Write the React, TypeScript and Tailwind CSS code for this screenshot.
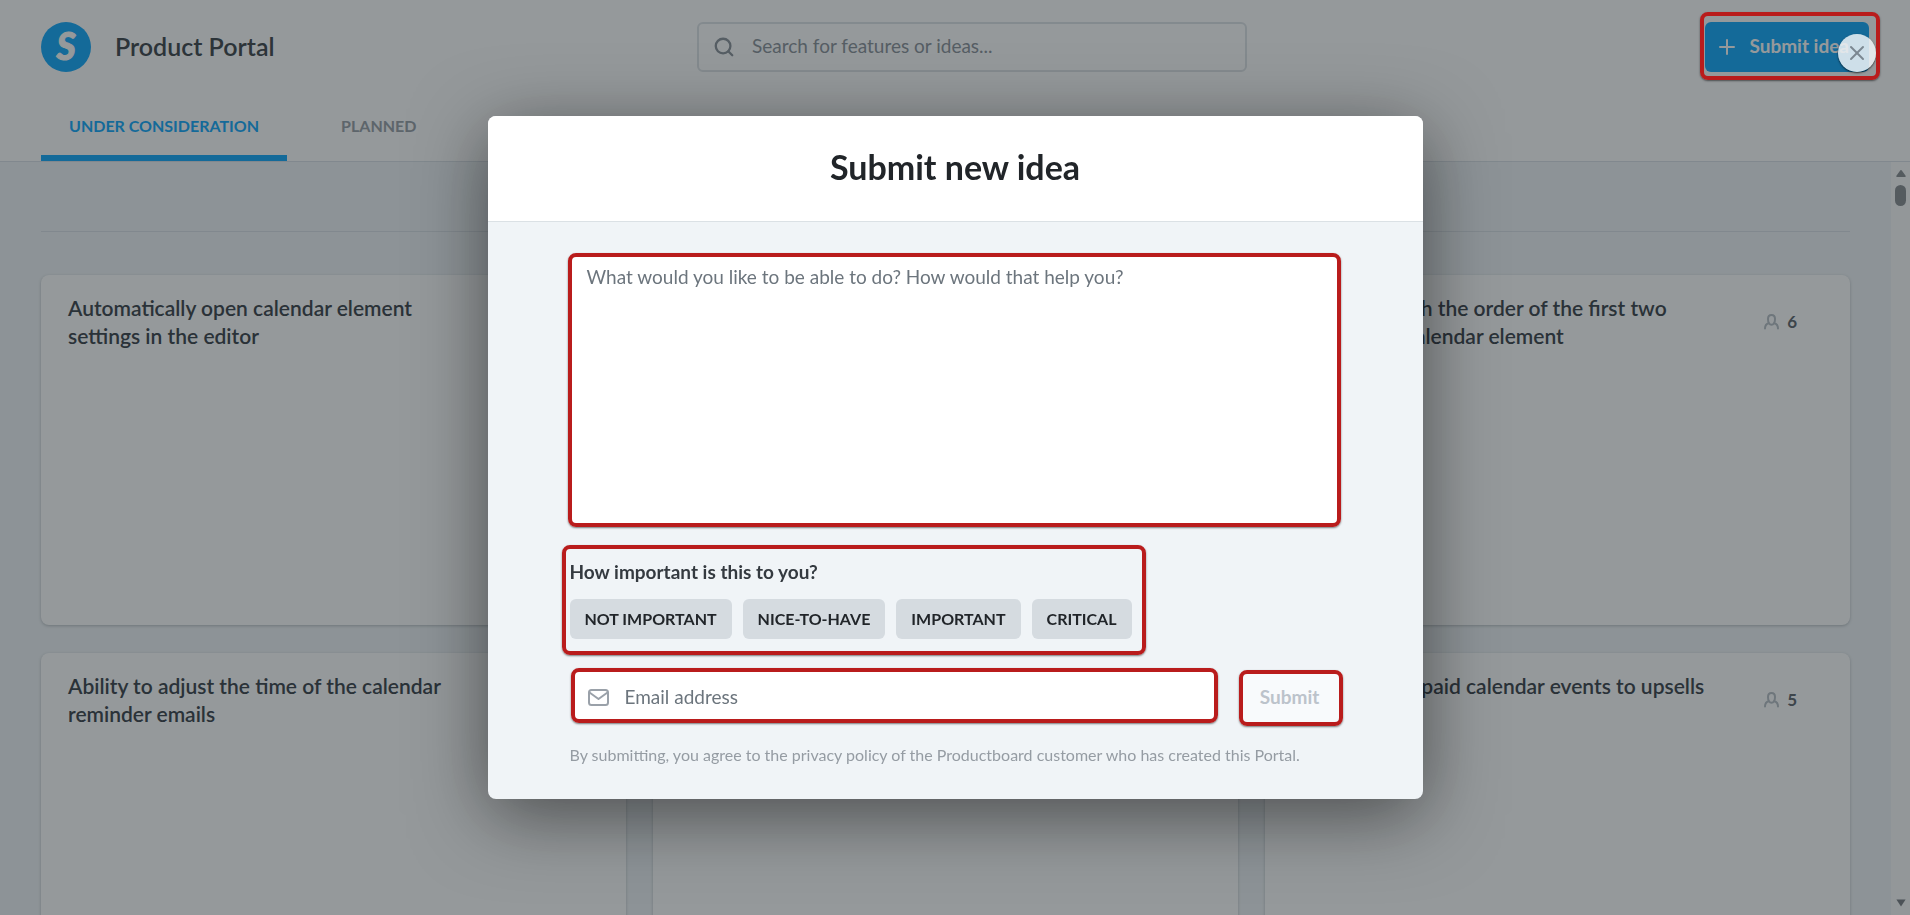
import { useState } from 'react';
import { Plus, Search, X } from 'lucide-react';
import { clsx } from 'clsx';

type Idea = {
  id: number;
  title?: string;
  votes?: number;
};

const IDEAS: Idea[] = [
  { id: 1, title: 'Automatically open calendar element settings in the editor' },
  { id: 2 },
  {
    id: 3,
    title: 'Need to switch the order of the first two fields in the calendar element',
    votes: 6,
  },
  { id: 4, title: 'Ability to adjust the time of the calendar reminder emails' },
  { id: 5 },
  { id: 6, title: 'Ability to add paid calendar events to upsells', votes: 5 },
];

const TABS = ['Under consideration', 'Planned'];
const IMPORTANCE = ['Not important', 'Nice-to-have', 'Important', 'Critical'];

function Highlight({ className }: { className: string }) {
  return (
    <span
      aria-hidden="true"
      className={clsx(
        'pointer-events-none absolute rounded-lg border-4 border-[#b91c1c] shadow-[0_1px_2px_rgba(0,0,0,0.5)]',
        className
      )}
    />
  );
}

function Logo() {
  return (
    <svg width="50" height="50" viewBox="0 0 50 50" role="img" aria-label="Logo">
      <circle cx="25" cy="25" r="25" fill="#15a9fb" />
      <text
        x="25"
        y="38"
        textAnchor="middle"
        fill="#fff"
        stroke="#fff"
        strokeWidth="1"
        fontFamily="Lato, sans-serif"
        fontWeight="900"
        fontStyle="italic"
        fontSize="37"
      >
        S
      </text>
    </svg>
  );
}

function VoterIcon() {
  return (
    <svg
      width="15"
      height="16"
      viewBox="0 0 15 16"
      fill="none"
      stroke="#b9c0c6"
      strokeWidth="2"
      strokeLinecap="round"
    >
      <path d="M7.500 1C5.300 1 4 2.500 4 5c0 3.200 1.400 5.800 3.500 5.800S11 8.200 11 5c0-2.500-1.300-4-3.500-4Z" />
      <path d="M4.800 9.200C2.300 9.800 1 11.500 1 14.500M10.200 9.200c2.500.6 3.800 2.300 3.800 5.300" />
    </svg>
  );
}

function MailIcon() {
  return (
    <svg
      width="21"
      height="17"
      viewBox="0 0 21 17"
      fill="none"
      stroke="#9aa1a9"
      strokeWidth="2"
      strokeLinejoin="round"
      className="shrink-0"
    >
      <rect x="1" y="1" width="19" height="15" rx="2.500" />
      <path d="M1.500 3.500 10.500 10l9-6.500" />
    </svg>
  );
}

function IdeaCard({ idea }: { idea: Idea }) {
  return (
    <article className="flex h-[350px] items-start justify-between rounded-lg bg-white pl-[27px] pr-[53px] pt-[19px] shadow-[0_1px_3px_rgba(20,30,40,0.25)]">
      {idea.title && (
        <h2 className="w-[420px] text-[21px] font-semibold leading-7 text-[#3c444c]">
          {idea.title}
        </h2>
      )}
      {idea.votes && (
        <span className="flex items-center gap-2 pt-4 text-[17px] font-bold leading-6 text-[#5f666e]">
          <VoterIcon />
          {idea.votes}
        </span>
      )}
    </article>
  );
}

function Scrollbar() {
  return (
    <div className="flex w-[19px] flex-col items-center justify-between bg-[#fbfbfb] py-2">
      <div className="flex flex-col items-center gap-2">
        <svg width="10" height="7" viewBox="0 0 10 7" fill="#8a8f93">
          <path d="M5 .8 9 6.200H1Z" stroke="#8a8f93" strokeWidth="1.500" strokeLinejoin="round" />
        </svg>
        <div className="h-[21px] w-[11px] rounded-full bg-[#8a8f93]" />
      </div>
      <svg width="10" height="8" viewBox="0 0 10 8" fill="#7a7f83">
        <path d="M5 7.500 9.600.5H.4Z" />
      </svg>
    </div>
  );
}

function Portal() {
  const [tab, setTab] = useState(TABS[0]);

  return (
    <div className="flex h-screen flex-col overflow-hidden bg-[#f0f4f7]">
      <header className="border-b border-[#dbe1e7] bg-white px-[41px] pt-[22px]">
        <div className="grid grid-cols-[656fr_550px_622fr] items-center">
          <div className="flex items-center gap-6">
            <Logo />
            <h1 className="pb-0.5 text-[25px] font-semibold leading-8 text-[#41474d]">
              Product Portal
            </h1>
          </div>
          <label className="flex h-[50px] items-center gap-[17px] rounded-md border-2 border-[#dfe3e7] px-3.5">
            <Search size={22} className="shrink-0 text-[#8d949c]" strokeWidth={2.5} />
            <input
              type="search"
              aria-label="Search"
              placeholder="Search for features or ideas..."
              className="min-w-0 flex-1 bg-transparent pb-0.5 text-[19px] outline-none placeholder:text-[#8d949c]"
            />
          </label>
          <div className="flex justify-end">
            <button
              type="button"
              className="flex h-[50px] items-center gap-2.5 rounded-md bg-[#15a9fb] pl-2.5 pr-5 text-[19px] font-bold text-white"
            >
              <Plus size={24} strokeWidth={2} />
              <span className="pb-0.5">Submit idea</span>
            </button>
          </div>
        </div>
        <nav className="mt-[21px] flex gap-[26px]">
          {TABS.map((name) => (
            <button
              key={name}
              type="button"
              onClick={() => setTab(name)}
              className={clsx(
                'h-[68px] border-b-6 px-7 pt-1 text-base font-bold uppercase',
                name === tab ? 'border-[#15a9fb] text-[#15a9fb]' : 'border-transparent text-[#9aa1a8]'
              )}
            >
              {name}
            </button>
          ))}
        </nav>
      </header>

      <div className="flex min-h-0 flex-1">
        <main className="min-w-0 flex-1 overflow-hidden px-[41px]">
          <div className="h-[70px] border-b border-[#dbe1e7]" />
          <div className="mt-[43px] grid grid-cols-3 gap-x-[27px] gap-y-7">
            {IDEAS.map((idea) => (
              <IdeaCard key={idea.id} idea={idea} />
            ))}
          </div>
        </main>
        <Scrollbar />
      </div>
    </div>
  );
}

function SubmitIdeaModal() {
  const [importance, setImportance] = useState('');

  return (
    <section
      role="dialog"
      aria-labelledby="modal-title"
      className="w-[935px] max-w-full rounded-lg bg-[#f0f4f7] shadow-[0_16px_75px_rgba(0,0,0,0.5)]"
    >
      <div className="rounded-t-lg border-b border-[#dbe1e5] bg-white pb-[34px] pt-[31px] text-center">
        <h2 id="modal-title" className="text-[34px] font-bold leading-10 text-[#212529]">
          Submit new idea
        </h2>
      </div>

      <form className="px-[82px] pb-8 pt-[33px]" onSubmit={(e) => e.preventDefault()}>
        <div className="relative h-[270px] pr-0.5">
          <textarea
            aria-label="Your idea"
            placeholder="What would you like to be able to do? How would that help you?"
            className="h-full w-full resize-none rounded-md bg-white px-[17px] py-2 text-[19px] leading-7 outline-none placeholder:text-[#6c757d]"
          />
          <Highlight className="-bottom-[2px] -left-[2px] -top-[2px] right-0" />
        </div>

        <div className="relative mt-[35px] w-fit">
          <fieldset>
            <legend className="text-[19px] font-bold leading-6 text-[#343a40]">
              How important is this to you?
            </legend>
            <div className="mt-[15px] flex gap-[11px]">
              {IMPORTANCE.map((level) => (
                <button
                  key={level}
                  type="button"
                  aria-pressed={importance === level}
                  onClick={() => setImportance(level)}
                  className="h-10 rounded-md bg-[#d5dbe0] px-[15px] text-base font-bold uppercase text-[#212529]"
                >
                  {level}
                </button>
              ))}
            </div>
          </fieldset>
          <Highlight className="-bottom-4 -left-2 -right-3.5 -top-[15px]" />
        </div>

        <div className="mt-[33px] flex gap-6 px-0.5">
          <label className="relative flex h-[50px] flex-1 items-center gap-4 rounded-md bg-white px-4">
            <MailIcon />
            <input
              type="email"
              aria-label="Email address"
              placeholder="Email address"
              className="min-w-0 flex-1 bg-transparent text-[19px] outline-none placeholder:text-[#6c757d]"
            />
            <Highlight className="-left-px -right-px -top-1 -bottom-px" />
          </label>
          <button
            type="submit"
            disabled
            className="relative w-[98px] rounded-md bg-[#f8fafc] text-[19px] font-bold text-[#bcc3cb]"
          >
            Submit
            <Highlight className="-bottom-1 -left-0.5 -right-1 -top-0.5" />
          </button>
        </div>

        <p className="mt-[21px] text-base leading-6 text-[#959ca3]">
          By submitting, you agree to the privacy policy of the Productboard customer who has created
          this Portal.
        </p>
      </form>
    </section>
  );
}

export default function App() {
  return (
    <div className="relative font-['Lato',sans-serif]">
      <Portal />
      <div className="fixed inset-0 flex items-center justify-center bg-[#141c21]/45">
        <SubmitIdeaModal />
        <button
          type="button"
          aria-label="Close"
          className="absolute right-[34px] top-[34px] flex size-[38px] items-center justify-center rounded-full bg-[#f0f4f7]/85 text-[#7b8791] shadow-[0_1px_2px_rgba(0,0,0,0.7)]"
        >
          <X size={24} strokeWidth={2} />
        </button>
        <Highlight className="right-[30px] top-3 h-[68px] w-[180px]" />
      </div>
    </div>
  );
}
